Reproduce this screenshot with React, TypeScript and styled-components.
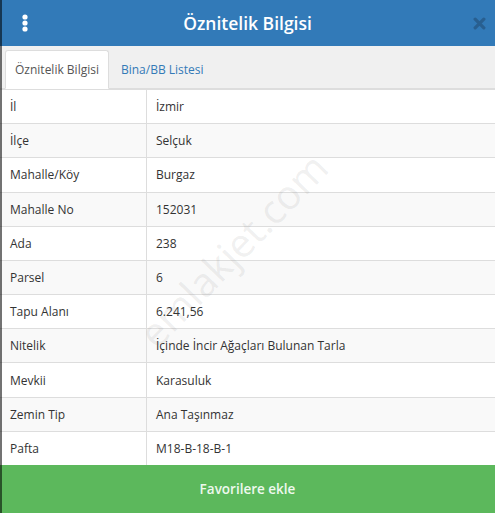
import React from 'react';
import styled, { createGlobalStyle } from 'styled-components';

const GlobalStyle = createGlobalStyle`
  html, body {
    margin: 0;
    padding: 0;
    background: #ffffff;
  }
  body {
    font-family: 'Open Sans', 'Noto Sans', 'Liberation Sans', sans-serif;
    color: #333333;
  }
`;

const Panel = styled.div`
  position: relative;
  width: 495px;
  height: 513px;
  display: flex;
  flex-direction: column;
  overflow: hidden;
  background: #ffffff;

  &::before {
    content: '';
    position: absolute;
    left: 0;
    top: 0;
    bottom: 0;
    width: 2px;
    background: rgba(0, 0, 0, 0.55);
    z-index: 3;
  }
`;

const Header = styled.header`
  height: 46px;
  flex: none;
  display: grid;
  grid-template-columns: 50px 1fr 50px;
  align-items: center;
  background: #327ab8;
  color: #ffffff;
`;

const MenuButton = styled.button`
  border: 0;
  background: none;
  padding: 0;
  margin-left: 12px;
  width: 26px;
  height: 26px;
  display: flex;
  align-items: center;
  justify-content: center;
`;

const Title = styled.h1`
  margin: 0;
  font-size: 17.5px;
  font-weight: 600;
  text-align: center;
`;

const CloseButton = styled.button`
  border: 0;
  background: none;
  padding: 0;
  justify-self: end;
  margin-right: 7px;
  width: 18px;
  height: 18px;
  display: flex;
  align-items: center;
  justify-content: center;
  opacity: 0.45;
`;

const TabBar = styled.nav`
  height: 43px;
  flex: none;
  display: flex;
  align-items: flex-end;
  padding-left: 5px;
  background: #f0f0f0;
  border-bottom: 1px solid #dddddd;
  box-sizing: border-box;
`;

const Tab = styled.div<{ $active?: boolean }>`
  height: 39px;
  box-sizing: border-box;
  display: flex;
  align-items: center;
  padding: 0 ${({ $active }) => ($active ? '9px' : '11px')};
  margin-bottom: -1px;
  font-size: 12px;
  border: 1px solid ${({ $active }) => ($active ? '#dddddd' : 'transparent')};
  border-bottom-color: ${({ $active }) => ($active ? '#ffffff' : 'transparent')};
  border-radius: 3px 3px 0 0;
  background: ${({ $active }) => ($active ? '#ffffff' : 'transparent')};
  color: ${({ $active }) => ($active ? '#555555' : '#337ab7')};
`;

const Table = styled.div`
  flex: 1;
  display: grid;
  grid-template-columns: 147px 1fr;
  grid-auto-rows: 1fr;
  font-size: 12px;
`;

const Cell = styled.div<{ $striped: boolean; $label?: boolean }>`
  display: flex;
  align-items: center;
  padding-left: ${({ $label }) => ($label ? '10px' : '9px')};
  border-top: 1px solid #dddddd;
  border-right: ${({ $label }) => ($label ? '1px solid #dddddd' : 'none')};
  background: ${({ $striped }) => ($striped ? '#f9f9f9' : '#ffffff')};
  color: #333333;
  white-space: nowrap;
`;

const FavButton = styled.button`
  height: 48px;
  flex: none;
  border: 0;
  background: #5cb85c;
  color: #eef8ee;
  font-family: inherit;
  font-size: 13.5px;
  font-weight: 600;
  padding: 0;
`;

const Watermark = styled.div`
  position: absolute;
  left: 146px;
  top: 320px;
  transform: rotate(-46deg);
  transform-origin: left center;
  font-size: 40px;
  line-height: 40px;
  color: rgba(110, 110, 110, 0.11);
  pointer-events: none;
  z-index: 2;
`;

const rows: [string, string][] = [
  ['İl', 'İzmir'],
  ['İlçe', 'Selçuk'],
  ['Mahalle/Köy', 'Burgaz'],
  ['Mahalle No', '152031'],
  ['Ada', '238'],
  ['Parsel', '6'],
  ['Tapu Alanı', '6.241,56'],
  ['Nitelik', 'İçinde İncir Ağaçları Bulunan Tarla'],
  ['Mevkii', 'Karasuluk'],
  ['Zemin Tip', 'Ana Taşınmaz'],
  ['Pafta', 'M18-B-18-B-1'],
];

const App = () => {
  return (
    <>
      <GlobalStyle />
      <Panel>
        <Header>
          <MenuButton aria-label="Menü">
            <svg width="6" height="18" viewBox="0 0 6 18">
              <circle cx="3" cy="3" r="2.6" fill="#ffffff" />
              <circle cx="3" cy="9" r="2.6" fill="#ffffff" />
              <circle cx="3" cy="15" r="2.6" fill="#ffffff" />
            </svg>
          </MenuButton>
          <Title>Öznitelik Bilgisi</Title>
          <CloseButton aria-label="Kapat">
            <svg width="13" height="13" viewBox="0 0 12 12">
              <path d="M2 2 L10 10 M10 2 L2 10" stroke="#1d3f60" strokeWidth="3" strokeLinecap="round" />
            </svg>
          </CloseButton>
        </Header>

        <TabBar>
          <Tab $active>Öznitelik Bilgisi</Tab>
          <Tab>Bina/BB Listesi</Tab>
        </TabBar>

        <Table>
          {rows.map(([label, value], index) => (
            <React.Fragment key={label}>
              <Cell $label $striped={index % 2 === 1}>{label}</Cell>
              <Cell $striped={index % 2 === 1}>{value}</Cell>
            </React.Fragment>
          ))}
        </Table>

        <FavButton type="button">Favorilere ekle</FavButton>

        <Watermark>emlakjet.com</Watermark>
      </Panel>
    </>
  );
};

export default App;
